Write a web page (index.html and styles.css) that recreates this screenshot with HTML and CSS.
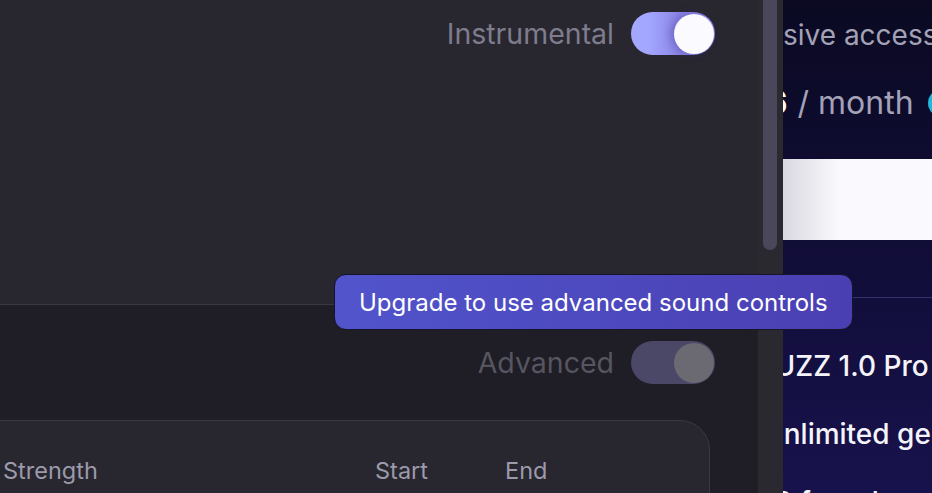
FILE: index.html
```html
<!DOCTYPE html>
<html>
  <head>
    <meta charset="UTF-8">
    <title>Sound Settings</title>
    <link rel="stylesheet" href="styles.css">
  </head>
  <body>
    <div class="editor">
      <div class="panel-top">
        <div class="option-row">
          <span class="option-label">Instrumental</span>
          <span class="toggle on"><span class="knob"></span></span>
        </div>
      </div>

      <div class="panel-bottom">
        <div class="option-row">
          <span class="option-label muted">Advanced</span>
          <span class="toggle disabled"><span class="knob"></span></span>
        </div>

        <div class="sound-card">
          <div class="sound-head">
            <span>Strength</span>
            <span>Start</span>
            <span>End</span>
          </div>
        </div>
      </div>
    </div>

    <div class="scroll-track">
      <div class="scroll-thumb"></div>
    </div>

    <div class="upsell">
      <div class="upsell-inner">
        <p class="upsell-title">Get exclusive access</p>
        <div class="price-row">
          <span class="price">$16</span>
          <span class="per">/ month</span>
          <span class="badge">Save 20%</span>
        </div>
        <button class="upgrade-btn">Upgrade now</button>
        <hr class="upsell-line">
        <ul class="features">
          <li class="pro">FUZZ 1.0 Pro</li>
          <li>Unlimited generations</li>
          <li>10 free downloads</li>
        </ul>
      </div>
    </div>

    <div class="tooltip">Upgrade to use advanced sound controls</div>
  </body>
</html>
```

FILE: styles.css
```css
body {
  margin: 0;
  height: 493px;
  overflow: hidden;
  display: flex;
  font-family: Inter, "Noto Sans", sans-serif;
  background-color: #1f1d26;
}

.editor {
  width: 758px;
  display: flex;
  flex-direction: column;
}

.panel-top {
  flex-shrink: 0;
  height: 305px;
  background-color: #28272f;
  border-bottom: 1px solid #393845;
  padding: 12px 43px 0 0;
  box-sizing: border-box;
}

.panel-bottom {
  flex: 1;
  min-height: 0;
  overflow: hidden;
  background-color: #1f1d26;
  padding: 36px 43px 0 0;
}

.option-row {
  display: flex;
  justify-content: flex-end;
  align-items: center;
  gap: 17px;
}

.option-label {
  font-size: 28.5px;
  color: #7e7c8d;
}

.option-label.muted {
  color: #57555f;
}

.toggle {
  width: 84px;
  height: 43px;
  border-radius: 22px;
  display: flex;
  justify-content: flex-end;
  align-items: center;
  padding: 0 1px;
  box-sizing: border-box;
}

.toggle.on {
  background: linear-gradient(90deg, #a4a7ff 20%, #8a83e6 60%);
}

.toggle.disabled {
  background-color: #4a4767;
}

.knob {
  width: 40px;
  height: 40px;
  border-radius: 50%;
}

.toggle.on .knob {
  background-color: #fbfbff;
  box-shadow: -4px 0 8px rgba(60, 50, 140, 0.35);
}

.toggle.disabled .knob {
  background-color: #6b6a72;
}

.sound-card {
  margin: 36px 5px 0 -30px;
  height: 120px;
  background-color: #28272f;
  border: 1px solid #393845;
  border-radius: 30px;
  padding: 35px 0 0 32px;
}

.sound-head {
  display: grid;
  grid-template-columns: 372px 130px auto;
  font-size: 23.5px;
  color: #9c9aab;
}

.scroll-track {
  width: 25px;
  flex-shrink: 0;
  background-color: #2a2930;
  padding-left: 5px;
  box-sizing: border-box;
}

.scroll-thumb {
  width: 14px;
  height: 250px;
  border-radius: 0 0 7px 7px;
  background-color: #4b475a;
}

.upsell {
  flex: 1;
  overflow: hidden;
  background: linear-gradient(180deg, #0b0a22 0%, #0f0c33 40%, #18124c 100%);
}

.upsell-inner {
  width: 820px;
  margin-left: -122px;
}

.upsell-title {
  margin: 18px 0 0 -2px;
  font-size: 28px;
  line-height: 34px;
  color: #a3a2b6;
  white-space: nowrap;
}

.price-row {
  display: flex;
  align-items: center;
  gap: 10px;
  margin-top: 32px;
  padding-left: 71px;
  line-height: 1.2;
  white-space: nowrap;
}

.price {
  font-size: 32px;
  font-weight: 700;
  color: #ffffff;
}

.per {
  font-size: 32px;
  color: #a3a2b6;
}

.badge {
  margin-left: 4px;
  padding: 3px 12px;
  border-radius: 14px;
  background-color: #22b8dc;
  color: #06303c;
  font-size: 18px;
}

.upgrade-btn {
  display: block;
  width: 100%;
  height: 81px;
  margin-top: 37px;
  border: none;
  border-radius: 12px;
  background: linear-gradient(90deg, #d8d7e0 120px, #fafafe 180px);
  font-family: inherit;
  font-size: 22px;
  font-weight: 600;
  color: #17124a;
}

.upsell-line {
  margin: 57px 0 0;
  border: none;
  border-top: 1px solid #35336b;
}

.features {
  list-style: none;
  margin: 0;
  padding: 34px 0 0 102px;
}

.features li {
  display: flex;
  align-items: center;
  height: 68px;
  font-size: 28px;
  font-weight: 500;
  color: #f4f4fa;
  white-space: nowrap;
}

.features li.pro {
  margin-left: -5px;
}

.tooltip {
  position: absolute;
  left: 334px;
  top: 274px;
  width: 519px;
  height: 56px;
  box-sizing: border-box;
  padding-left: 24px;
  display: flex;
  align-items: center;
  border: 1px solid #15142a;
  border-radius: 12px;
  background: linear-gradient(90deg, #5154cb, #4a3fb2);
  color: #ffffff;
  font-size: 24px;
}
```
